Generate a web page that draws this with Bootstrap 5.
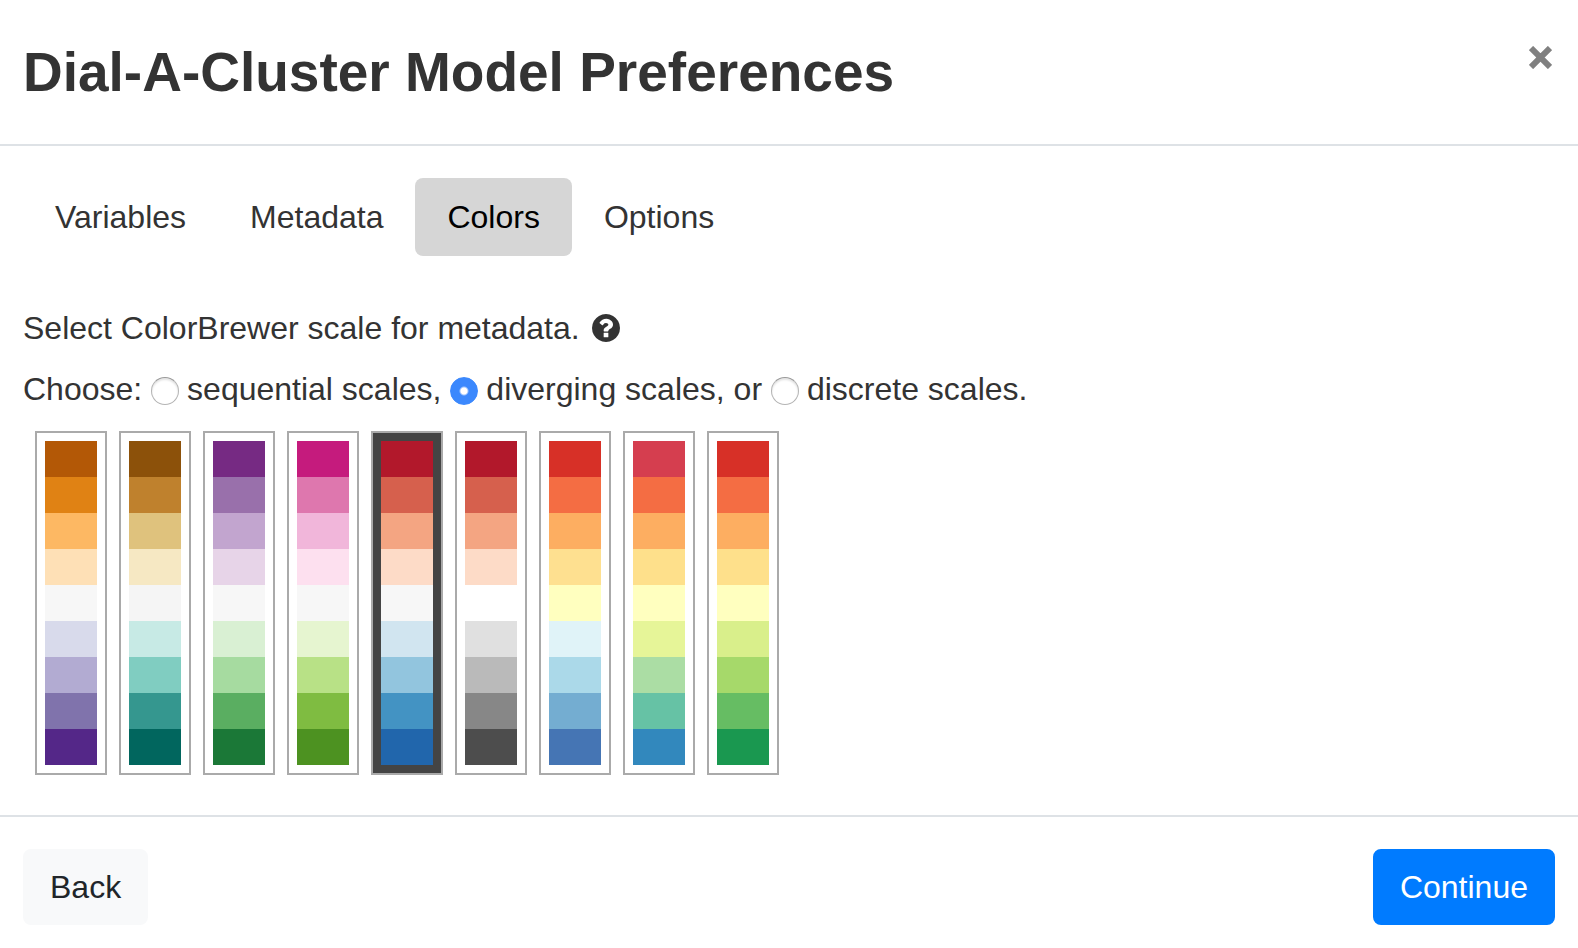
<!DOCTYPE html>
<html lang="en">
<head>
<meta charset="utf-8">
<meta name="viewport" content="width=device-width, initial-scale=1">
<title>Dial-A-Cluster Model Preferences</title>
<link href="https://cdn.jsdelivr.net/npm/bootstrap@5.3.0/dist/css/bootstrap.min.css" rel="stylesheet">
<style>
  body { font-family: "Liberation Sans", Arial, sans-serif; font-size: 32px; line-height: 46px; color: #333; background: #fff; }
  .prefs-header { padding: 32px 23px; border-bottom: 2px solid #dee2e6; }
  .prefs-title { font-size: 55px; line-height: 80px; font-weight: 700; }
  .prefs-close { padding: 3px; margin-top: 11px; color: #808080; line-height: 0; }
  .prefs-body { padding: 32px 23px 40px; }
  .nav-pills { --bs-nav-link-padding-x: 32px; --bs-nav-link-padding-y: 16px; --bs-nav-link-color: #333; --bs-nav-link-hover-color: #000;
    --bs-nav-link-font-size: 32px; --bs-nav-pills-border-radius: 8px; --bs-nav-pills-link-active-color: #000; --bs-nav-pills-link-active-bg: #d6d6d6; margin-bottom: 49px; }
  .prefs-line { margin-bottom: 15px; }
  .scale-radio { appearance: none; width: 28px; height: 28px; margin: 0 8px 0 0; vertical-align: -5px; border-radius: 50%; border: 1px solid #b4b4b4; border-top-color: #999; background: #fff; box-shadow: inset 0 2px 2px #e4e4e4; }
  .scale-radio:checked { border-color: #3b88fd; background: radial-gradient(circle, #fff 3px, #3b88fd 5px); box-shadow: none; }
  .help-icon { width: 28px; height: 28px; margin-left: 3px; vertical-align: -3px; }
  .scale-list { gap: 12px; padding: 4px 12px 0; }
  .scale-box { width: 72px; padding: 8px; border: 2px solid #aaa; background: #fff; }
  .scale-box[aria-pressed="true"] { background: #444; }
  .scale-step { height: 36px; }
  .prefs-footer { padding: 32px 23px 23px; border-top: 2px solid #dee2e6; }
  .prefs-footer .btn { --bs-btn-font-size: 32px; --bs-btn-line-height: 46px; --bs-btn-padding-x: 25px; --bs-btn-padding-y: 13px; --bs-btn-border-width: 2px; --bs-btn-border-radius: 8px; }
  .btn-light { --bs-btn-color: #212529; }
  .btn-primary { --bs-btn-bg: #007bff; --bs-btn-border-color: #007bff; }
</style>
</head>
<body>
<header class="prefs-header d-flex justify-content-between align-items-start">
  <h1 class="prefs-title mb-0">Dial-A-Cluster Model Preferences</h1>
  <button type="button" class="prefs-close border-0 bg-transparent" aria-label="Close">
    <svg width="23" height="23" viewBox="0 0 23 23" fill="none" stroke="currentColor" stroke-width="6" aria-hidden="true"><path d="M2 2 21 21M21 2 2 21"/></svg>
  </button>
</header>

<main class="prefs-body">
  <ul class="nav nav-pills">
    <li class="nav-item"><a class="nav-link" href="#variables">Variables</a></li>
    <li class="nav-item"><a class="nav-link" href="#metadata">Metadata</a></li>
    <li class="nav-item"><a class="nav-link active" aria-current="page" href="#colors">Colors</a></li>
    <li class="nav-item"><a class="nav-link" href="#options">Options</a></li>
  </ul>

  <p class="prefs-line">Select ColorBrewer scale for metadata.
    <svg class="help-icon" viewBox="0 128 1536 1536" fill="currentColor" aria-hidden="true"><path d="M896 1376v-192q0-14-9-23t-23-9h-192q-14 0-23 9t-9 23v192q0 14 9 23t23 9h192q14 0 23-9t9-23zm256-672q0-88-55.500-163t-138.500-116-170-41q-243 0-371 213-15 24 8 42l132 100q7 6 19 6 16 0 25-12 53-68 86-92 34-24 86-24 48 0 85.500 26t37.500 59q0 38-20 61t-68 45q-63 28-115.500 86.500t-52.500 125.500v36q0 14 9 23t23 9h192q14 0 23-9t9-23q0-19 21.500-49.500t54.500-49.500q32-18 49-28.500t46-35 44.500-48 28-60.500 12.500-81zm384 192q0 209-103 385.500t-279.500 279.500-385.500 103-385.500-103-279.500-279.500-103-385.500 103-385.500 279.500-279.500 385.500-103 385.500 103 279.500 279.500 103 385.500z"/></svg>
  </p>
  <div class="prefs-line">Choose:
    <input class="scale-radio" type="radio" name="scale" id="sequential"><label for="sequential">sequential scales,</label>
    <input class="scale-radio" type="radio" name="scale" id="diverging" checked><label for="diverging">diverging scales,</label> or
    <input class="scale-radio" type="radio" name="scale" id="discrete"><label for="discrete">discrete scales.</label>
  </div>
  <div class="scale-list d-flex flex-wrap" id="scales" role="group" aria-label="Diverging scales"></div>
</main>

<footer class="prefs-footer d-flex justify-content-between">
  <button type="button" class="btn btn-light">Back</button>
  <button type="button" class="btn btn-primary">Continue</button>
</footer>

<script src="https://cdn.jsdelivr.net/npm/bootstrap@5.3.0/dist/js/bootstrap.bundle.min.js"></script>
<script>
  // ColorBrewer diverging scales, nine steps each
  const scales = {
    PuOr: 'b35806 e08214 fdb863 fee0b6 f7f7f7 d8daeb b2abd2 8073ac 542788',
    BrBG: '8c510a bf812d dfc27d f6e8c3 f5f5f5 c7eae5 80cdc1 35978f 01665e',
    PRGn: '762a83 9970ab c2a5cf e7d4e8 f7f7f7 d9f0d3 a6dba0 5aae61 1b7837',
    PiYG: 'c51b7d de77ae f1b6da fde0ef f7f7f7 e6f5d0 b8e186 7fbc41 4d9221',
    RdBu: 'b2182b d6604d f4a582 fddbc7 f7f7f7 d1e5f0 92c5de 4393c3 2166ac',
    RdGy: 'b2182b d6604d f4a582 fddbc7 ffffff e0e0e0 bababa 878787 4d4d4d',
    RdYlBu: 'd73027 f46d43 fdae61 fee090 ffffbf e0f3f8 abd9e9 74add1 4575b4',
    Spectral: 'd53e4f f46d43 fdae61 fee08b ffffbf e6f598 abdda4 66c2a5 3288bd',
    RdYlGn: 'd73027 f46d43 fdae61 fee08b ffffbf d9ef8b a6d96a 66bd63 1a9850'
  };
  const list = document.getElementById('scales');
  for (const [name, colors] of Object.entries(scales)) {
    const box = document.createElement('button');
    box.type = 'button';
    box.className = 'scale-box';
    box.setAttribute('aria-label', name);
    box.setAttribute('aria-pressed', name === 'RdBu');
    for (const color of colors.split(' ')) {
      const step = document.createElement('span');
      step.className = 'scale-step d-block';
      step.style.backgroundColor = '#' + color;
      box.append(step);
    }
    box.addEventListener('click', () => {
      for (const other of list.children) other.setAttribute('aria-pressed', other === box);
    });
    list.append(box);
  }
</script>
</body>
</html>
